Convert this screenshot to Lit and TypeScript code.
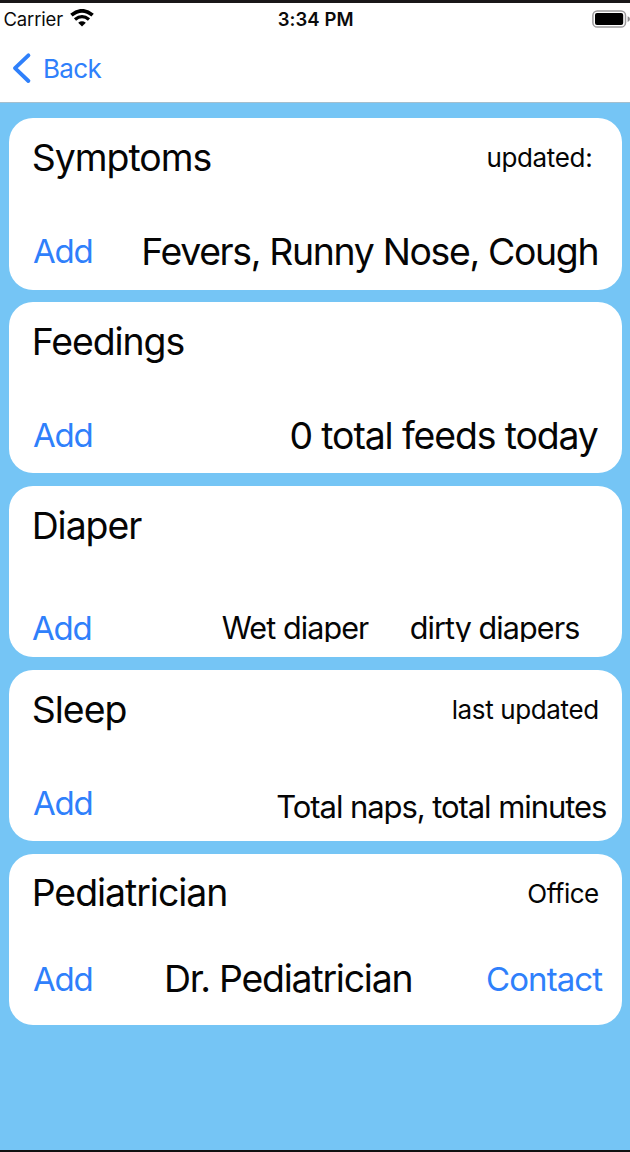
import { LitElement, html, css, nothing } from "lit";
import { customElement, property } from "lit/decorators.js";

interface Entry {
  kind: string;
  title: string;
  note?: string;
  values: string[];
  action?: string;
}

const ENTRIES: Entry[] = [
  { kind: "symptoms", title: "Symptoms", note: "updated:", values: ["Fevers, Runny Nose, Cough"] },
  { kind: "feedings", title: "Feedings", values: ["0 total feeds today"] },
  { kind: "diaper", title: "Diaper", values: ["Wet diaper", "dirty diapers"] },
  { kind: "sleep", title: "Sleep", note: "last updated", values: ["Total naps, total minutes"] },
  { kind: "doctor", title: "Pediatrician", note: "Office", values: ["Dr. Pediatrician"], action: "Contact" },
];

@customElement("status-bar")
export class StatusBar extends LitElement {
  static styles = css`
    :host {
      display: grid;
      grid-template-columns: 1fr auto 1fr;
      align-items: center;
      height: 32px;
      padding-left: 3.4px;
      font-size: 18.5px;
      line-height: 32px;
      color: #0b0b0b;
    }
    .carrier {
      display: flex;
      align-items: center;
      gap: 7px;
      letter-spacing: -0.14px;
    }
    .wifi {
      display: block;
      margin-top: -2px;
    }
    .time {
      font-weight: 600;
      letter-spacing: 0.1px;
      padding-right: 2px;
    }
    .battery {
      display: block;
      justify-self: end;
      margin-top: -1px;
    }
  `;
  render() {
    return html`
      <div class="carrier">
        <span>Carrier</span>
        <svg class="wifi" width="24" height="18" viewBox="0 0 24 18" fill="none" stroke="#000">
          <path d="M1.4 6.2Q12 -2.6 22.6 6.2" stroke-width="3.7" />
          <path d="M5 10.5Q12 4.7 19 10.5" stroke-width="3.3" />
          <path d="M12 17.6L8.2 13.8Q12 10.9 15.8 13.8Z" fill="#000" stroke="none" />
        </svg>
      </div>
      <div class="time">3:34 PM</div>
      <svg class="battery" width="38" height="18" viewBox="0 0 38 18">
        <rect x="0.9" y="0.9" width="32.6" height="16.2" rx="4.4" fill="#fff" stroke="#9c9a9c" stroke-width="1.5" />
        <rect x="3" y="3" width="28.2" height="12" rx="2" fill="#000" />
        <path d="M35.6 6.2Q38 7 38 9T35.6 12Z" fill="#8c8a8c" />
      </svg>
    `;
  }
}

@customElement("log-card")
export class LogCard extends LitElement {
  @property({ attribute: false }) entry!: Entry;

  static styles = css`
    :host {
      display: block;
      height: 171.4px;
      box-sizing: border-box;
      padding-top: 16.7px;
      border-radius: 24px;
      background: #fff;
      color: #050505;
      white-space: nowrap;
      line-height: 46px;
    }
    .head,
    .foot {
      display: flex;
      align-items: center;
      justify-content: space-between;
      height: 46px;
    }
    .head {
      padding: 0 23.4px 0 23px;
    }
    .foot {
      margin-top: 47.4px;
      padding: 0 23.9px 0 24.4px;
    }
    .title,
    .value {
      font-size: 37.4px;
    }
    .title {
      letter-spacing: -1.05px;
    }
    .note {
      font-size: 26px;
      letter-spacing: -0.38px;
      padding-top: 1px;
    }
    .link {
      font-size: 33px;
      letter-spacing: -1.3px;
      color: #2f80fb;
    }
    .symptoms .title { letter-spacing: -0.98px; }
    .symptoms .note { letter-spacing: -0.34px; }
    .head.symptoms { padding-right: 29.8px; }
    .symptoms .value { letter-spacing: -1.34px; }
    .feedings .value { letter-spacing: -1.12px; }
    .foot.feedings { padding-right: 24.4px; }
    .symptoms .value,
    .feedings .value { padding-top: 1px; }
    .foot.diaper {
      margin-top: 56.2px;
      padding: 0 42.6px 0 23.4px;
    }
    .diaper .link { margin-right: auto; }
    .diaper .value {
      font-size: 30.5px;
      letter-spacing: -0.9px;
      clip-path: inset(0 0 8.8px 0);
    }
    .diaper .value + .value { margin-left: 41px; }
    .sleep .title { letter-spacing: -0.95px; }
    .sleep .value {
      font-size: 31px;
      letter-spacing: -1.07px;
      padding-top: 8px;
    }
    .foot.sleep { padding-right: 15.8px; }
    .doctor .title { letter-spacing: -1.02px; }
    .doctor .note { letter-spacing: -0.5px; }
    .foot.doctor {
      margin-top: 40px;
      padding-right: 20px;
    }
    .doctor .value {
      letter-spacing: -1.22px;
      margin-right: 2.2px;
    }
    .doctor .action { letter-spacing: -0.93px; }
  `;

  render() {
    const e = this.entry;
    return html`
      <div class="head ${e.kind}">
        <span class="title">${e.title}</span>
        ${e.note ? html`<span class="note">${e.note}</span>` : nothing}
      </div>
      <div class="foot ${e.kind}">
        <span class="link">Add</span>
        ${e.values.map((v) => html`<span class="value">${v}</span>`)}
        ${e.action ? html`<span class="link action">${e.action}</span>` : nothing}
      </div>
    `;
  }
}

@customElement("app-root")
export class AppRoot extends LitElement {
  static styles = css`
    :host {
      display: flex;
      flex-direction: column;
      box-sizing: border-box;
      height: 1152px;
      border-top: 3px solid #191718;
      border-bottom: 2px solid #111;
      background: #75c5f5;
      font-family: Inter, "Liberation Sans", sans-serif;
      overflow: hidden;
    }
    .top {
      height: 99px;
      background: #fff;
      border-bottom: 1px solid #a5bfce;
    }
    .back {
      display: flex;
      align-items: center;
      gap: 11px;
      height: 66px;
      padding-left: 12px;
      font-size: 26px;
      letter-spacing: -0.65px;
      color: #2f80fb;
    }
    .cards {
      display: flex;
      flex-direction: column;
      gap: 12.5px;
      padding: 15.2px 7.9px 0 8.7px;
    }
  `;

  render() {
    return html`
      <div class="top">
        <status-bar></status-bar>
        <div class="back">
          <svg width="20" height="32" viewBox="0 0 20 32" fill="none" stroke="#2f80fb" stroke-width="3.9" stroke-linecap="round" stroke-linejoin="round">
            <path d="M16.4 3.4L3 16.2L16.4 29" />
          </svg>
          <span>Back</span>
        </div>
      </div>
      <div class="cards">
        ${ENTRIES.map((e) => html`<log-card .entry=${e}></log-card>`)}
      </div>
    `;
  }
}
